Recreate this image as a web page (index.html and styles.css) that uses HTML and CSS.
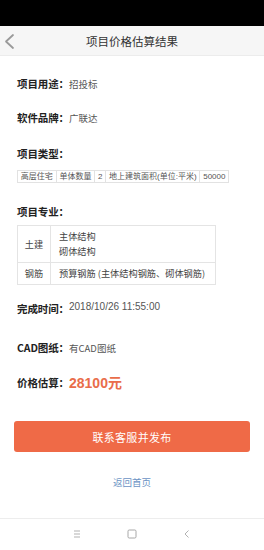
FILE: index.html
```html
<!DOCTYPE html>
<html lang="zh">
<head>
<meta charset="utf-8">
<title>项目价格估算结果</title>
<link rel="stylesheet" href="styles.css">
</head>
<body>
<div class="page">
  <div class="status"></div>
  <header class="header">
    <svg class="back" width="16" height="30" viewBox="0 0 16 30">
      <polyline points="13,9 6,15.5 13,22" fill="none" stroke="#9a9a9a" stroke-width="1.8" stroke-linecap="round" stroke-linejoin="round"/>
    </svg>
    <div class="title">项目价格估算结果</div>
  </header>
  <main class="content">
    <div class="row r1"><span class="label">项目用途：</span><span class="value">招投标</span></div>
    <div class="row r2"><span class="label">软件品牌：</span><span class="value">广联达</span></div>
    <div class="row r3"><span class="label">项目类型：</span></div>
    <table class="type-table">
      <tr>
        <td>高层住宅</td>
        <td>单体数量</td>
        <td>2</td>
        <td>地上建筑面积(单位:平米)</td>
        <td>50000</td>
      </tr>
    </table>
    <div class="row r4"><span class="label">项目专业：</span></div>
    <table class="major-table">
      <tr>
        <td class="cat">土建</td>
        <td class="items">主体结构<br>砌体结构</td>
      </tr>
      <tr>
        <td class="cat">钢筋</td>
        <td class="items">预算钢筋 (主体结构钢筋、砌体钢筋)</td>
      </tr>
    </table>
    <div class="row r5"><span class="label">完成时间：</span><span class="value date">2018/10/26 11:55:00</span></div>
    <div class="row r6"><span class="label">CAD图纸：</span><span class="value">有CAD图纸</span></div>
    <div class="row r7"><span class="label">价格估算：</span><span class="price">28100元</span></div>
    <button class="btn">联系客服并发布</button>
    <a class="home">返回首页</a>
  </main>
  <nav class="navbar">
    <svg width="10" height="10" viewBox="0 0 10 10">
      <g stroke="#a8a8a8" stroke-width="0.9">
        <line x1="2" y1="2" x2="8" y2="2"/>
        <line x1="2" y1="5" x2="8" y2="5"/>
        <line x1="2" y1="8" x2="8" y2="8"/>
      </g>
    </svg>
    <svg width="10" height="10" viewBox="0 0 10 10">
      <rect x="1" y="1" width="8" height="8" rx="1.2" fill="none" stroke="#a8a8a8" stroke-width="1"/>
    </svg>
    <svg width="10" height="10" viewBox="0 0 10 10">
      <polyline points="6.5,1.5 3,5 6.5,8.5" fill="none" stroke="#a8a8a8" stroke-width="0.9"/>
    </svg>
  </nav>
</div>
</body>
</html>
```
FILE: styles.css
```css
* { box-sizing: border-box; }
html, body { margin: 0; padding: 0; background: #fff; }
body {
  font-family: "Noto Sans CJK SC", "Liberation Sans", sans-serif;
  color: #333;
}
.page {
  width: 264px;
  height: 550px;
  display: flex;
  flex-direction: column;
  overflow: hidden;
}
.status { height: 26px; background: #000; flex: none; }
.header {
  height: 30px;
  flex: none;
  background: #f6f6f6;
  border-bottom: 1px solid #ececec;
  display: flex;
  align-items: center;
  justify-content: center;
  position: relative;
}
.back { position: absolute; left: 0; top: 0; }
.title { font-size: 11.5px; color: #333; line-height: 30px; }

.content {
  padding: 0 17px 0 17px;
  display: flex;
  flex-direction: column;
}
.row {
  height: 16px;
  line-height: 16px;
  display: flex;
  align-items: center;
  white-space: nowrap;
}
.label { font-size: 10.5px; font-weight: 700; color: #222; letter-spacing: -0.1px; }
.value { font-size: 9.5px; color: #555; }
.date { font-family: "Liberation Sans", sans-serif; font-size: 10px; align-self: flex-start; line-height: 11px; }
.price {
  font-family: "Liberation Sans", "Noto Sans CJK SC", sans-serif;
  font-size: 14px;
  font-weight: 700;
  color: #e96d4a;
}
.r1 { margin-top: 20px; }
.r2 { margin-top: 18px; }
.r3 { margin-top: 20px; }
.r4 { margin-top: 21px; }
.r5 { margin-top: 16px; }
.r6 { margin-top: 23px; }
.r7 { margin-top: 17px; height: 20px; }

.type-table {
  align-self: flex-start;
  margin-top: 8px;
  border-collapse: collapse;
  font-family: "Liberation Sans", "Noto Sans CJK SC", sans-serif;
  font-size: 8px;
  color: #555;
}
.type-table td {
  border: 1px solid #e2e2e2;
  padding: 0 2.8px;
  line-height: 11px;
  white-space: nowrap;
}
.major-table {
  align-self: flex-start;
  margin-top: 5px;
  width: 199px;
  border-collapse: collapse;
  font-size: 9.2px;
  color: #444;
}
.major-table td {
  border: 1px solid #e4e4e4;
  padding: 3px 0 3px 8px;
  line-height: 15px;
  white-space: nowrap;
}
.major-table td.cat {
  width: 33px;
  padding: 3px 0;
  text-align: center;
}
.btn {
  margin-top: 28px;
  margin-left: -3px;
  width: 236px;
  height: 31px;
  border: none;
  border-radius: 3px;
  background: #ef6a47;
  color: #fff;
  font-family: "Noto Sans CJK SC", sans-serif;
  font-size: 11px;
  letter-spacing: 0.3px;
}
.home {
  margin-top: 23px;
  text-align: center;
  font-size: 9.5px;
  line-height: 14px;
  color: #6b93c4;
}
.navbar {
  margin-top: auto;
  height: 32px;
  flex: none;
  border-top: 1px solid #ededed;
  display: flex;
  align-items: center;
  justify-content: center;
  gap: 45px;
  padding-bottom: 1px;
}
```
